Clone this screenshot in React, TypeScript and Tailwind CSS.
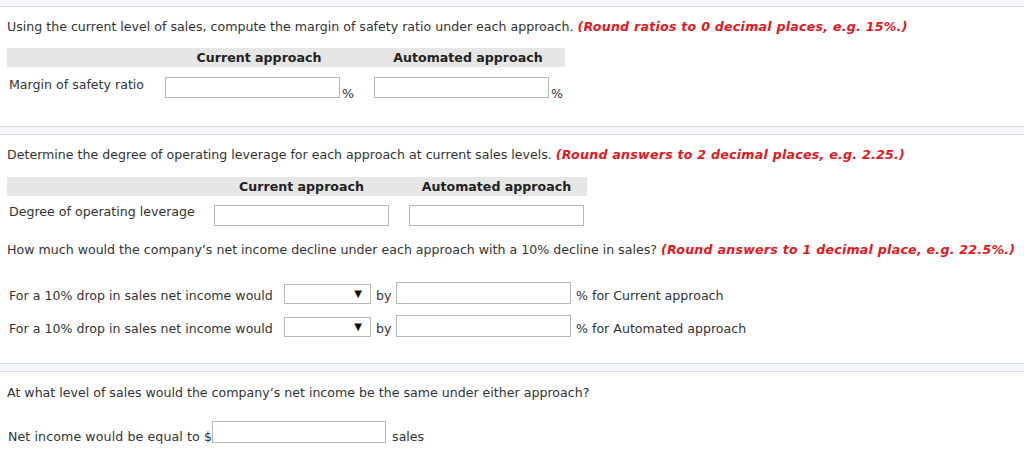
import React from 'react';

const red = 'font-bold italic text-[#e3171e] tracking-[0.25px]';

function Box({ w = 'w-[175px]', h = 'h-[21px]' }: { w?: string; h?: string }) {
  return <div className={`${w} ${h} shrink-0 border border-[#b8b8b8] bg-white`} />;
}

function Select() {
  return (
    <div className="relative w-[87px] h-[20px] shrink-0 border border-[#b8b8b8] bg-white">
      <span className="absolute right-[8px] top-[1px] text-[10px] leading-[16px] text-[#111]">▼</span>
    </div>
  );
}

function Separator() {
  return (
    <div className="border-t border-b border-[#d9dde1] bg-[#f4f7fb] h-[9px]" />
  );
}

export default function App() {
  return (
    <div className="w-[1024px] h-[469px] bg-white text-[#333] text-[12.6px] leading-[15px] overflow-hidden" style={{ fontFamily: '"DejaVu Sans", Verdana, sans-serif' }}>
      {/* tail of previous block */}
      <div className="h-[7px] bg-[#f4f7fb] border-b border-[#d9dde1]" />

      {/* margin of safety */}
      <div className="pl-[7px] pt-[12px] h-[119px]">
        <p>
          Using the current level of sales, compute the margin of safety ratio under each approach.{' '}
          <span className={red}>(Round ratios to 0 decimal places, e.g. 15%.)</span>
        </p>
        <div className="mt-[14px] flex w-[558px] h-[19px] items-center bg-[#e6e6e6] font-bold text-[#222]">
          <div className="w-[158px]" />
          <div className="w-[188px] text-center">Current approach</div>
          <div className="w-[21px]" />
          <div className="w-[188px] text-center">Automated approach</div>
        </div>
        <div className="mt-[10px] flex items-start">
          <div className="w-[158px] pl-[2px]">Margin of safety ratio</div>
          <div className="flex items-end w-[209px]">
            <Box />
            <span className="ml-[2px] -mb-[3px]">%</span>
          </div>
          <div className="flex items-end">
            <Box />
            <span className="ml-[2px] -mb-[3px]">%</span>
          </div>
        </div>
      </div>

      <Separator />

      {/* operating leverage */}
      <div className="pl-[7px] pt-[12px] h-[228px]">
        <p>
          Determine the degree of operating leverage for each approach at current sales levels.{' '}
          <span className={red}>(Round answers to 2 decimal places, e.g. 2.25.)</span>
        </p>
        <div className="mt-[15px] flex w-[580px] h-[19px] items-center bg-[#e6e6e6] font-bold text-[#222]">
          <div className="w-[207px]" />
          <div className="w-[175px] text-center">Current approach</div>
          <div className="w-[20px]" />
          <div className="w-[175px] text-center">Automated approach</div>
        </div>
        <div className="mt-[9px] flex items-center">
          <div className="w-[207px] pl-[2px] -mt-[8px]">Degree of operating leverage</div>
          <Box />
          <div className="w-[20px]" />
          <Box />
        </div>

        <p className="mt-[16px]">
          How much would the company’s net income decline under each approach with a 10% decline in sales?{' '}
          <span className={red}>(Round answers to 1 decimal place, e.g. 22.5%.)</span>
        </p>

        <div className="mt-[24px] flex items-center">
          <span className="pl-[2px] w-[277px] pt-[6px]">For a 10% drop in sales net income would</span>
          <div className="mt-[3px]"><Select /></div>
          <span className="ml-[5px] w-[20px] pt-[6px]">by</span>
          <Box h="h-[22px]" />
          <span className="ml-[5px] pt-[6px]">% for Current approach</span>
        </div>
        <div className="mt-[10px] flex items-center">
          <span className="pl-[2px] w-[277px] pt-[6px]">For a 10% drop in sales net income would</span>
          <div className="mt-[3px]"><Select /></div>
          <span className="ml-[5px] w-[20px] pt-[6px]">by</span>
          <Box h="h-[22px]" />
          <span className="ml-[5px] pt-[6px]">% for Automated approach</span>
        </div>
      </div>

      <Separator />

      {/* break even */}
      <div className="pl-[7px] pt-[13px]">
        <p>At what level of sales would the company’s net income be the same under either approach?</p>
        <div className="mt-[20px] flex items-center">
          <span className="pl-[1px] pt-[9px] tracking-[0.1px]">Net income would be equal to $</span>
          <Box w="w-[174px]" h="h-[22px]" />
          <span className="ml-[6px] pt-[9px]">sales</span>
        </div>
      </div>
    </div>
  );
}
